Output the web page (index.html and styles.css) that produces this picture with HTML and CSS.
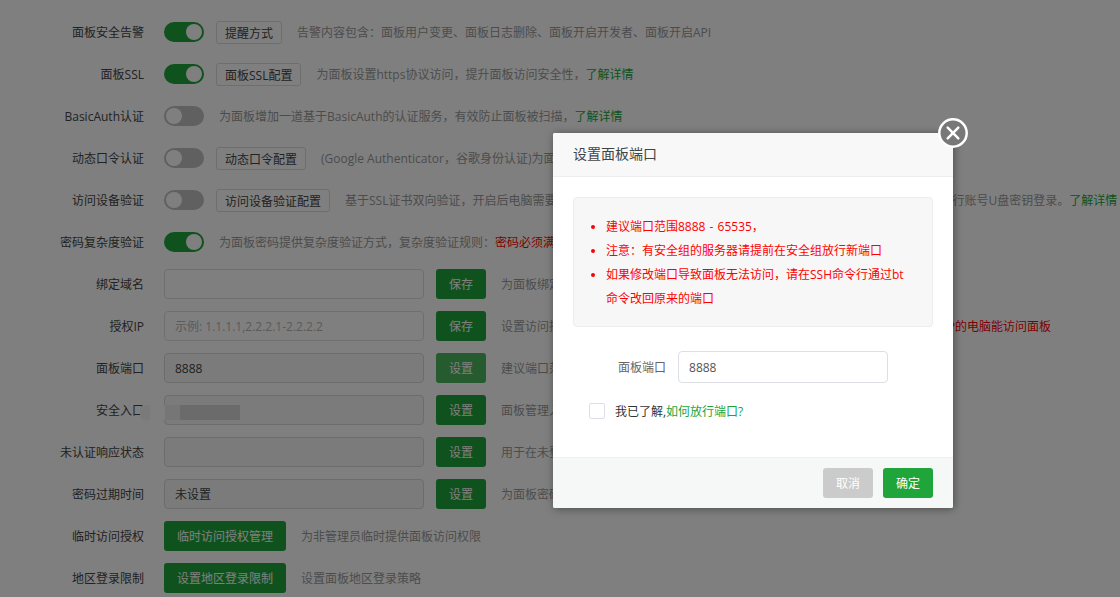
FILE: index.html
```html
<!DOCTYPE html>
<html lang="zh-CN">

<head>
    <meta charset="UTF-8">
    <meta name="viewport" content="width=device-width, initial-scale=1.0">
    <title>面板设置</title>
    <link rel="stylesheet" href="styles.css">
</head>

<body>
    <main class="settings">
        <div class="line">
            <span class="label">面板安全告警</span>
            <span class="switch on"></span>
            <button class="btn-plain">提醒方式</button>
            <span class="tips">告警内容包含：面板用户变更、面板日志删除、面板开启开发者、面板开启API</span>
        </div>
        <div class="line">
            <span class="label">面板SSL</span>
            <span class="switch on"></span>
            <button class="btn-plain">面板SSL配置</button>
            <span class="tips">为面板设置https协议访问，提升面板访问安全性，<a>了解详情</a></span>
        </div>
        <div class="line">
            <span class="label">BasicAuth认证</span>
            <span class="switch"></span>
            <span class="tips">为面板增加一道基于BasicAuth的认证服务，有效防止面板被扫描，<a>了解详情</a></span>
        </div>
        <div class="line">
            <span class="label">动态口令认证</span>
            <span class="switch"></span>
            <button class="btn-plain">动态口令配置</button>
            <span class="tips">(Google Authenticator，谷歌身份认证)为面板登录增加验证</span>
        </div>
        <div class="line">
            <span class="label">访问设备验证</span>
            <span class="switch"></span>
            <button class="btn-plain">访问设备验证配置</button>
            <span class="tips">基于SSL证书双向验证，开启后电脑需要安装证书并通过浏览器选择对应的证书之后才能够正常访问面板，类似于银行账号U盘密钥登录。<a>了解详情</a></span>
        </div>
        <div class="line">
            <span class="label">密码复杂度验证</span>
            <span class="switch on"></span>
            <span class="tips">为面板密码提供复杂度验证方式，复杂度验证规则：<em>密码必须满足密码长度大于8位</em></span>
        </div>
        <div class="line">
            <span class="label">绑定域名</span>
            <input class="field" type="text">
            <button class="btn">保存</button>
            <span class="tips">为面板绑定一个访问域名</span>
        </div>
        <div class="line">
            <span class="label">授权IP</span>
            <input class="field" type="text" placeholder="示例: 1.1.1.1,2.2.2.1-2.2.2.2">
            <button class="btn">保存</button>
            <span class="tips">设置访问授权IP，设置多个请使用逗号(,)隔开，<em class="warn">注意：一旦设置授权IP，只有被指定IP的电脑能访问面板</em></span>
        </div>
        <div class="line">
            <span class="label">面板端口</span>
            <input class="field" type="text" value="8888" disabled>
            <button class="btn active">设置</button>
            <span class="tips">建议端口范围8888 - 65535</span>
        </div>
        <div class="line">
            <span class="label">安全入口</span>
            <input class="field" type="text" disabled>
            <button class="btn">设置</button>
            <span class="tips">面板管理入口</span>
        </div>
        <div class="line">
            <span class="label">未认证响应状态</span>
            <input class="field" type="text" disabled>
            <button class="btn">设置</button>
            <span class="tips">用于在未登录时响应</span>
        </div>
        <div class="line">
            <span class="label">密码过期时间</span>
            <input class="field" type="text" value="未设置" disabled>
            <button class="btn">设置</button>
            <span class="tips">为面板密码设置过期时间</span>
        </div>
        <div class="line">
            <span class="label">临时访问授权</span>
            <button class="btn wide">临时访问授权管理</button>
            <span class="tips">为非管理员临时提供面板访问权限</span>
        </div>
        <div class="line">
            <span class="label">地区登录限制</span>
            <button class="btn wide">设置地区登录限制</button>
            <span class="tips">设置面板地区登录策略</span>
        </div>
    </main>

    <div class="shade"></div>
    <div class="mask">
        <i class="m1"></i><i class="m2"></i><i class="m3"></i><i class="m4"></i>
    </div>

    <div class="dialog">
        <div class="dialog-title">设置面板端口</div>
        <svg class="dialog-close" viewBox="0 0 30 30">
            <circle cx="15" cy="15" r="13.7" />
            <path d="M9.7 9.7l10.6 10.6M20.3 9.7L9.7 20.3" />
        </svg>
        <div class="dialog-body">
            <ul class="notice">
                <li>建议端口范围8888 - 65535，</li>
                <li>注意：有安全组的服务器请提前在安全组放行新端口</li>
                <li>如果修改端口导致面板无法访问，请在SSH命令行通过bt命令改回原来的端口</li>
            </ul>
            <div class="port">
                <span>面板端口</span>
                <input type="text" value="8888">
            </div>
            <div class="agree">
                <span class="checkbox"></span>
                <span class="agree-text">我已了解,<a>如何放行端口?</a></span>
            </div>
        </div>
        <div class="dialog-footer">
            <button class="btn cancel">取消</button>
            <button class="btn">确定</button>
        </div>
    </div>
</body>

</html>
```
FILE: styles.css
```css
* {
    box-sizing: border-box;
}

body {
    margin: 0;
    height: 597px;
    overflow: hidden;
    background: #fff;
    color: #333;
    font-family: 'Open Sans', 'Noto Sans CJK SC', sans-serif;
    font-size: 12px;
    line-height: 20px;
}

button,
input {
    font: inherit;
    outline: none;
}

a {
    color: #20a53a;
}

.settings {
    padding-top: 11px;
}

.line {
    display: flex;
    align-items: center;
    height: 42px;
    white-space: nowrap;
}

.label {
    width: 144px;
    margin-right: 20px;
    padding-top: 2px;
    text-align: right;
    color: #444;
    flex-shrink: 0;
}

.switch {
    width: 40px;
    height: 20px;
    padding: 2px;
    border-radius: 10px;
    background: #c0c0c0;
    flex-shrink: 0;
}

.switch::before {
    content: '';
    display: block;
    width: 16px;
    height: 16px;
    border-radius: 50%;
    background: #fff;
}

.switch.on {
    background: #20a53a;
}

.switch.on::before {
    margin-left: 20px;
}

.btn-plain {
    height: 23px;
    margin-left: 12px;
    padding: 2px 8px 0;
    border: 1px solid #dcdcdc;
    border-radius: 3px;
    background: #fff;
    color: #444;
    line-height: 19px;
    flex-shrink: 0;
}

.tips {
    margin-left: 15px;
    padding-top: 2px;
    color: #999;
}

.tips em {
    color: #f00;
    font-style: normal;
}

.tips .warn {
    margin-left: 4px;
}

.field {
    width: 260px;
    height: 30px;
    margin-right: 12px;
    padding: 0 10px;
    border: 1px solid #dcdfe6;
    border-radius: 4px;
    background: #fff;
    color: #444;
}

.field::placeholder {
    color: #b4b4b4;
}

.field:disabled {
    border-color: #d8d8d8;
    background: #f6f6f6;
}

.btn {
    width: 50px;
    height: 30px;
    padding: 2px 0 0;
    border: 0;
    border-radius: 3px;
    background: #20a53a;
    color: #fff;
    flex-shrink: 0;
}

.btn.active {
    background: #4db761;
}

.btn.wide {
    width: 122px;
}

.shade {
    position: absolute;
    inset: 0;
    background: rgba(0, 0, 0, 0.5);
}

/* blurred out entrance path */
.mask {
    position: absolute;
    left: 140px;
    top: 405px;
    display: flex;
}

.mask i {
    height: 15px;
}

.m1 {
    width: 10px;
    background: #7a7a7a;
    border-radius: 5px 0 0 5px;
}

.m2 {
    width: 15px;
    background: #7f7f7f;
}

.m3 {
    width: 15px;
    background: #767676;
}

.m4 {
    width: 60px;
    background: #6b6b6b;
}

.dialog {
    position: absolute;
    left: 553px;
    top: 133px;
    width: 400px;
    height: 375px;
    display: flex;
    flex-direction: column;
    background: #fff;
    border-radius: 2px;
    box-shadow: 1px 1px 8px rgba(0, 0, 0, 0.4);
}

.dialog-title {
    height: 44px;
    padding-left: 20px;
    border-bottom: 1px solid #eee;
    border-radius: 2px 2px 0 0;
    background: #f8f8f8;
    color: #444;
    font-size: 14px;
    line-height: 42px;
}

.dialog-close {
    position: absolute;
    right: -15px;
    top: -15px;
    width: 30px;
    height: 30px;
    fill: #787878;
    stroke: #fff;
    stroke-width: 2.5;
    stroke-linecap: round;
}

.dialog-body {
    flex: 1;
    padding: 20px;
}

.notice {
    height: 130px;
    margin: 0 0 24px;
    padding: 17px 20px 15px 32px;
    border: 1px solid #ececec;
    border-radius: 4px;
    background: #f7f7f7;
    color: #f00;
    line-height: 24px;
    word-spacing: 1px;
}

.port {
    display: flex;
    align-items: center;
    padding-left: 45px;
    color: #666;
}

.port span,
.agree-text {
    padding-top: 2px;
}

.port input {
    width: 210px;
    height: 32px;
    margin-left: 12px;
    padding: 0 10px;
    border: 1px solid #dcdfe6;
    border-radius: 4px;
    color: #555;
}

.agree {
    display: flex;
    align-items: center;
    margin-top: 17px;
    padding-left: 16px;
}

.checkbox {
    width: 16px;
    height: 16px;
    margin-right: 10px;
    border: 1px solid #dcdfe6;
    border-radius: 2px;
}

.dialog-footer {
    display: flex;
    justify-content: flex-end;
    gap: 10px;
    height: 51px;
    padding: 10px 20px;
    border-top: 1px solid #edf1f0;
    border-radius: 0 0 2px 2px;
    background: #f6f8f8;
}

.btn.cancel {
    background: #cbcbcb;
}
```
